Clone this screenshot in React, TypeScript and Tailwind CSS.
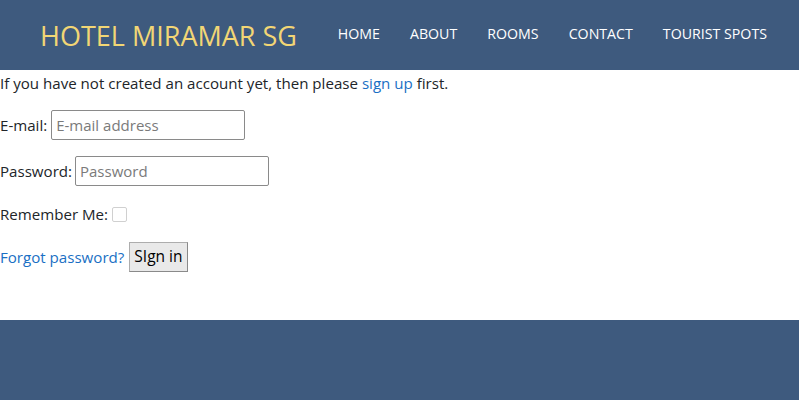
import React from 'react';

const navItems = ['HOME', 'ABOUT', 'ROOMS', 'CONTACT', 'TOURIST SPOTS'];

const App = () => {
  return (
    <div className="min-h-[400px] bg-white text-[#212529]" style={{ fontFamily: '"Open Sans", sans-serif' }}>
      {/* Header */}
      <header className="h-[70px] bg-[#3e5a7e] flex items-center pl-[40px] pr-[32px]">
        <h1 className="text-[27px] text-[#f2d675] leading-none">HOTEL MIRAMAR SG</h1>
        <nav className="ml-auto flex items-center gap-[30px] pb-[2px]">
          {navItems.map((item) => (
            <a key={item} href="#" className="text-[14.2px] text-white leading-none">
              {item}
            </a>
          ))}
        </nav>
      </header>

      {/* Login form */}
      <main className="pb-[48px] text-[15.1px]">
        <p className="leading-[24px] pt-[1px]">
          If you have not created an account yet, then please{' '}
          <a href="#" className="text-[#1a6fc4]">sign up</a> first.
        </p>

        <div className="mt-[15px] flex items-center h-[30px]">
          <label htmlFor="email">E-mail:</label>
          <input
            id="email"
            type="email"
            placeholder="E-mail address"
            className="ml-[4px] w-[194px] h-[30px] border border-[#8a8a8a] rounded-[2px] px-[4px] text-[15px] placeholder:text-[#7a7a7a]"
          />
        </div>

        <div className="mt-[16px] flex items-center h-[30px]">
          <label htmlFor="password">Password:</label>
          <input
            id="password"
            type="password"
            placeholder="Password"
            className="ml-[3px] w-[194px] h-[30px] border border-[#8a8a8a] rounded-[2px] px-[4px] text-[15px] placeholder:text-[#7a7a7a]"
          />
        </div>

        <div className="mt-[16px] flex items-center h-[24px]">
          <label htmlFor="remember">Remember Me:</label>
          <input
            id="remember"
            type="checkbox"
            className="ml-[4px] w-[15px] h-[15px] appearance-none border border-[#d0d0d0] rounded-[2px] bg-white"
          />
        </div>

        <div className="mt-[16px] flex items-center h-[30px]">
          <a href="#" className="text-[#1a6fc4]">Forgot password?</a>
          <button
            type="button"
            className="ml-[5px] h-[30px] px-[4px] bg-[#e9e9e9] border border-[#adadad] border-b-[#8a8a8a] border-r-[#8a8a8a] text-[15.5px] text-black"
          >
            SIgn in
          </button>
        </div>
      </main>

      {/* Footer */}
      <footer className="h-[80px] bg-[#3e5a7e]" />
    </div>
  );
};

export default App;
